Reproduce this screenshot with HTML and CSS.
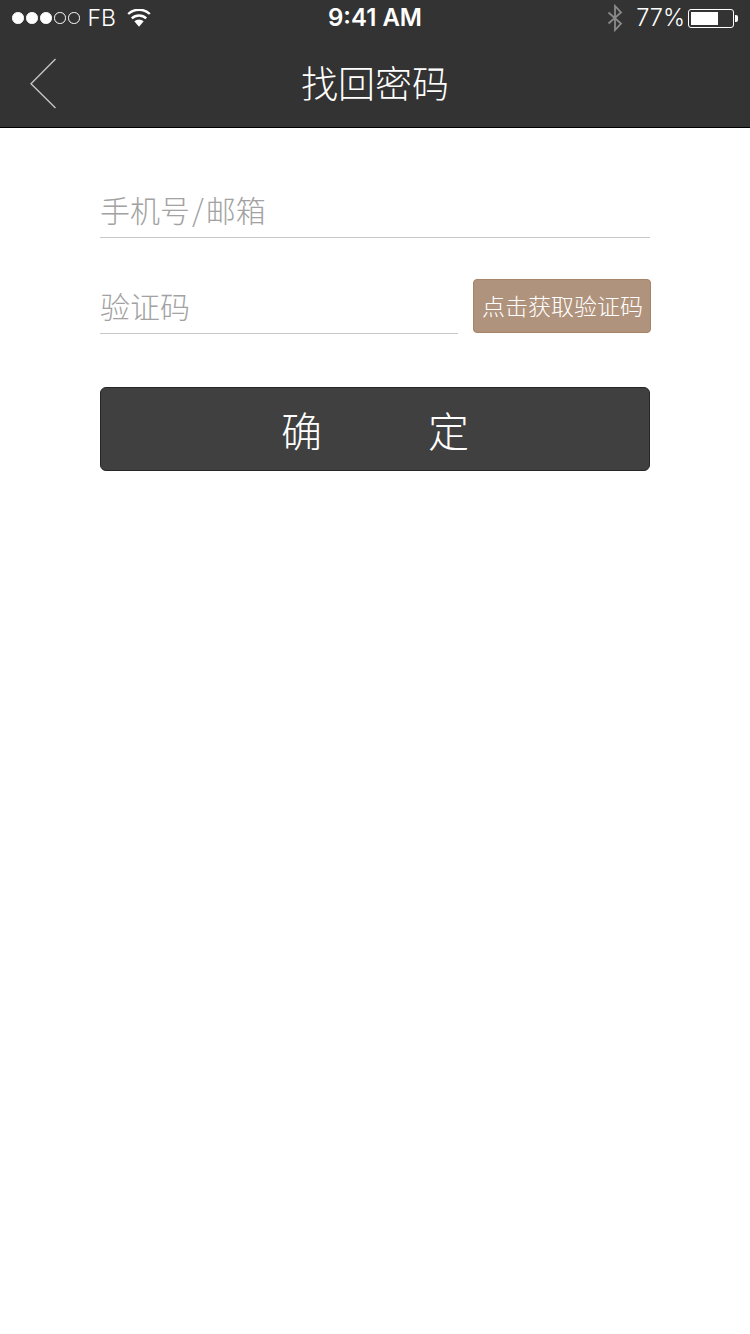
FILE: index.html
```html
<!DOCTYPE html>
<html lang="zh-CN">
<head>
<meta charset="utf-8">
<title>找回密码</title>
<link rel="stylesheet" href="styles.css">
</head>
<body>
<header class="top">
  <div class="status">
    <div class="status-left">
      <span class="dots">
        <i class="dot on"></i><i class="dot on"></i><i class="dot on"></i><i class="dot"></i><i class="dot"></i>
      </span>
      <span class="carrier">FB</span>
      <svg class="wifi" width="24" height="18" viewBox="0 0 24 18">
        <path d="M12 17.800 7.300 12.300a7 7 0 0 1 9.400 0z" fill="#fff"/>
        <path d="M4.800 9.300a10.500 10.500 0 0 1 14.400 0" fill="none" stroke="#fff" stroke-width="2.400"/>
        <path d="M1.200 5a15.700 15.700 0 0 1 21.600 0" fill="none" stroke="#fff" stroke-width="2.400"/>
      </svg>
    </div>
    <div class="clock">9:41 AM</div>
    <div class="status-right">
      <svg class="bt" width="16" height="28" viewBox="0 0 16 28">
        <path d="M1.500 8.500 14 19.500 8 26V2l6 6.500L1.500 19.500" fill="none" stroke="#8a8a8a" stroke-width="1.800"/>
      </svg>
      <span class="pct">77%</span>
      <span class="battery"><span class="battery-shell"><span class="battery-fill"></span></span><span class="battery-cap"></span></span>
    </div>
  </div>
  <div class="nav">
    <svg class="back" width="27" height="52" viewBox="0 0 27 52">
      <path d="M25.500 1 1 25.800 25.500 50" fill="none" stroke="#c4c4c4" stroke-width="1.400"/>
    </svg>
    <h1 class="title">找回密码</h1>
  </div>
</header>
<main class="form">
  <div class="field field-account">手机号<span class="slash">/</span>邮箱</div>
  <div class="code-row">
    <div class="field field-code">验证码</div>
    <button class="code-btn" type="button">点击获取验证码</button>
  </div>
  <button class="submit" type="button"><span>确</span><span>定</span></button>
</main>
</body>
</html>
```
FILE: styles.css
```css
* { box-sizing: border-box; }
html, body { margin: 0; padding: 0; }
body {
  width: 750px;
  height: 1334px;
  background: #fff;
  font-family: "Noto Sans CJK SC", "Liberation Sans", sans-serif;
  overflow: hidden;
}
.top {
  height: 128px;
  background: #333;
  border-bottom: 1px solid #000;
  color: #fff;
}
.status {
  height: 36px;
  padding: 0 12px 0 12px;
  display: flex;
  align-items: center;
  justify-content: space-between;
  position: relative;
}
.status-left, .status-right { display: flex; align-items: center; }
.dots { display: flex; gap: 2.500px; }
.dot {
  width: 11.500px;
  height: 11.500px;
  border-radius: 50%;
  border: 1px solid #fff;
}
.dot.on { background: #fff; }
.carrier {
  margin-left: 8px;
  font: 300 23px/36px Inter, "Liberation Sans", sans-serif;
}
.wifi { margin-left: 11px; margin-top: -1px; }
.clock {
  position: absolute;
  left: 0;
  right: 0;
  text-align: center;
  font: 600 24px/36px Inter, "Liberation Sans", sans-serif;
}
.bt { margin-right: 13px; }
.pct { font: 300 23.500px/36px Inter, "Liberation Sans", sans-serif; margin-right: 3px; }
.battery { display: flex; align-items: center; }
.battery-shell {
  width: 46px;
  height: 19px;
  border: 1px solid #fff;
  border-radius: 3px;
  padding: 2px;
  display: block;
}
.battery-fill { display: block; width: 27px; height: 13px; background: #fff; }
.battery-cap {
  width: 3px;
  height: 7px;
  background: #fff;
  margin-left: 1px;
  border-radius: 0 2px 2px 0;
}
.nav {
  height: 91px;
  position: relative;
  display: flex;
  align-items: center;
  justify-content: center;
}
.back { position: absolute; left: 30px; top: 22px; }
.title {
  margin: 0;
  font-size: 37px;
  font-weight: 300;
  line-height: 50px;
}
.form {
  padding: 62px 100px 0;
  display: flex;
  flex-direction: column;
}
.field {
  height: 48px;
  border-bottom: 1px solid #c8c8c8;
  color: #a2a2a2;
  font-size: 30px;
  font-weight: 300;
  line-height: 38px;
}
.slash { padding: 0 2px; }
.code-row {
  margin-top: 41px;
  width: 551px;
  height: 55px;
  display: flex;
  justify-content: space-between;
  align-items: flex-start;
}
.field-code { width: 358px; height: 55px; line-height: 52px; }
.code-btn {
  width: 178px;
  height: 54px;
  padding: 0 0 2px 1px;
  background: #b0937c;
  border: 1px solid #a5846a;
  border-radius: 4px;
  color: #fff;
  font-family: inherit;
  font-size: 23px;
  font-weight: 300;
  white-space: nowrap;
}
.submit {
  margin-top: 53px;
  width: 550px;
  height: 84px;
  padding: 0;
  background: #404040;
  border: 1px solid #262626;
  border-radius: 6px;
  color: #fff;
  font-family: inherit;
  font-size: 41px;
  font-weight: 300;
  display: flex;
  justify-content: center;
  align-items: center;
  gap: 106px;
}
```
